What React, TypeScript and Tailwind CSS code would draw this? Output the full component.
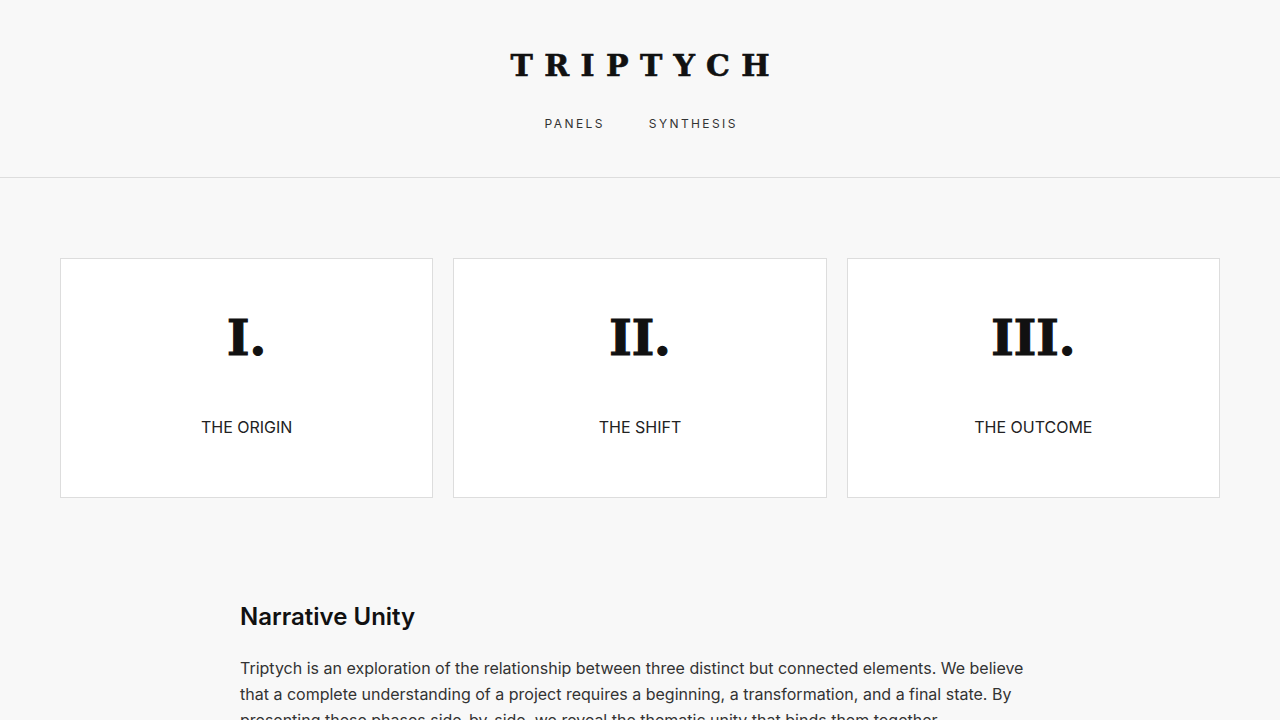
const panels = [
  { numeral: 'I.', label: 'THE ORIGIN' },
  { numeral: 'II.', label: 'THE SHIFT' },
  { numeral: 'III.', label: 'THE OUTCOME' },
];

export default function App() {
  return (
    <div className="min-h-screen bg-[#f8f8f8] text-[#111] font-['Inter',sans-serif]">
      <header className="border-b border-[#dddddd] pt-[48px] pb-[45px] flex flex-col items-center">
        <h1 className="font-['DejaVu_Serif'] font-bold text-[30px] leading-[36px] tracking-[0.38em] pl-[0.38em] [-webkit-text-stroke:0.6px_#111]">
          TRIPTYCH
        </h1>
        <nav className="mt-[32px] flex gap-[44px] pl-[0.2em] text-[12px] leading-[16px] tracking-[0.2em] text-[#333]">
          <a href="#panels">PANELS</a>
          <a href="#synthesis">SYNTHESIS</a>
        </nav>
      </header>

      <main className="px-[60px] pt-[80px]">
        <section id="panels" className="grid grid-cols-3 gap-5">
          {panels.map((p) => (
            <div
              key={p.label}
              className="h-[240px] bg-white border border-[#dddddd] flex flex-col items-center pt-[51px]"
            >
              <div className="font-['DejaVu_Serif'] font-bold text-[48px] leading-[56px] [-webkit-text-stroke:1.2px_#111]">
                {p.numeral}
              </div>
              <div className="mt-[49px] text-[16px] leading-[24px] text-[#222]">{p.label}</div>
            </div>
          ))}
        </section>

        <section id="synthesis" className="max-w-[800px] mx-auto mt-[103px]">
          <h2 className="text-[24px] leading-[32px] font-semibold">Narrative Unity</h2>
          <p className="mt-[22px] text-[16px] leading-[26px] text-[#333]">
            Triptych is an exploration of the relationship between three distinct but connected
            elements. We believe that a complete understanding of a project requires a beginning, a
            transformation, and a final state. By presenting these phases side-by-side, we reveal
            the thematic unity that binds them together.
          </p>
        </section>
      </main>
    </div>
  );
}
